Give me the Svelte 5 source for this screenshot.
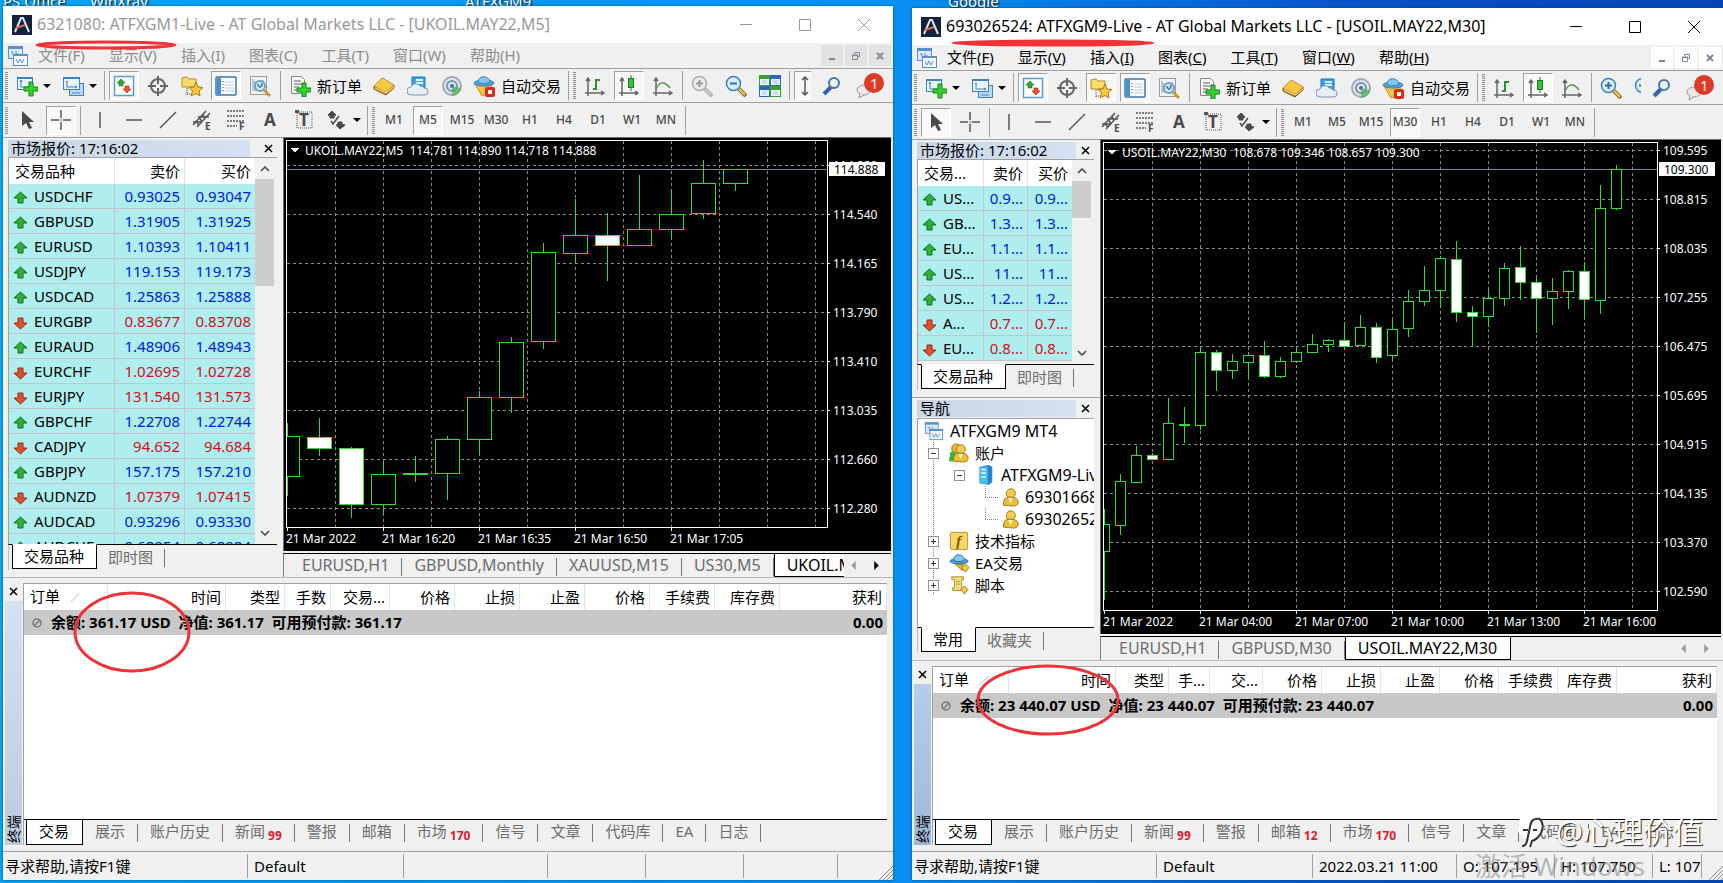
<script>
    const up = true;
    const down = false;

    const menus = [
        ['文件', 'F'],
        ['显示', 'V'],
        ['插入', 'I'],
        ['图表', 'C'],
        ['工具', 'T'],
        ['窗口', 'W'],
        ['帮助', 'H']
    ];

    const drawTools = ['vline', 'hline', 'trend', 'channel', 'fibo', 'letter', 'label'];
    const periods = ['M1', 'M5', 'M15', 'M30', 'H1', 'H4', 'D1', 'W1', 'MN'];

    // candle: [high, body top, body bottom, low, bearish]
    let windows = $state([
        {
            id: 'gm1',
            active: false,
            title: '6321080: ATFXGM1-Live - AT Global Markets LLC - [UKOIL.MAY22,M5]',
            pressed: ['watch', 'terminal'],
            cursor: 'cross',
            period: 'M5',
            head: ['交易品种', '卖价', '买价'],
            quotes: [
                ['USDCHF', '0.93025', '0.93047', up],
                ['GBPUSD', '1.31905', '1.31925', up],
                ['EURUSD', '1.10393', '1.10411', up],
                ['USDJPY', '119.153', '119.173', up],
                ['USDCAD', '1.25863', '1.25888', up],
                ['EURGBP', '0.83677', '0.83708', down],
                ['EURAUD', '1.48906', '1.48943', up],
                ['EURCHF', '1.02695', '1.02728', down],
                ['EURJPY', '131.540', '131.573', down],
                ['GBPCHF', '1.22708', '1.22744', up],
                ['CADJPY', '94.652', '94.684', down],
                ['GBPJPY', '157.175', '157.210', up],
                ['AUDNZD', '1.07379', '1.07415', down],
                ['AUDCAD', '0.93296', '0.93330', up],
                ['AUDCHF', '0.68954', '0.68984', up]
            ],
            navigator: false,
            chart: {
                width: 607,
                height: 413,
                caption: 'UKOIL.MAY22,M5  114.781 114.890 114.718 114.888',
                last: '114.888',
                lastLine: 31,
                firstLine: 27,
                prices: ['114.920', '114.540', '114.165', '113.790', '113.410', '113.035', '112.660', '112.280'],
                times: ['21 Mar 2022', '21 Mar 16:20', '21 Mar 16:35', '21 Mar 16:50', '21 Mar 17:05'],
                step: 32,
                half: 12,
                candles: [
                    [285, 298, 338, 358], [280, 299, 310, 318, 1], [309, 310, 366, 380, 1],
                    [324, 336, 366, 377], [318, 335, 336, 344], [298, 301, 335, 362],
                    [253, 259, 301, 316], [199, 204, 259, 275], [105, 114, 203, 211],
                    [61, 97, 115, 125], [75, 97, 107, 143, 1], [37, 91, 107, 108],
                    [51, 76, 91, 100], [22, 45, 75, 81], [31, 31, 45, 53]
                ]
            },
            chartTabs: ['EURUSD,H1', 'GBPUSD,Monthly', 'XAUUSD,M15', 'US30,M5', 'UKOIL.MAY22,M5'],
            moreTabs: true,
            columns: ['时间', '类型', '手数', '交易...', '价格', '止损', '止盈', '价格', '手续费', '库存费', '获利'],
            balance: '余额: 361.17 USD  净值: 361.17  可用预付款: 361.17',
            bottomTabs: [['交易'], ['展示'], ['账户历史'], ['新闻', 99], ['警报'], ['邮箱'], ['市场', 170], ['信号'], ['文章'], ['代码库'], ['EA'], ['日志']],
            status: ['', '', '', '', '']
        },
        {
            id: 'gm9',
            active: true,
            title: '693026524: ATFXGM9-Live - AT Global Markets LLC - [USOIL.MAY22,M30]',
            pressed: ['watch', 'navigator', 'terminal'],
            cursor: 'arrow',
            period: 'M30',
            head: ['交易...', '卖价', '买价'],
            quotes: [
                ['US...', '0.9...', '0.9...', up],
                ['GB...', '1.3...', '1.3...', up],
                ['EU...', '1.1...', '1.1...', up],
                ['US...', '11...', '11...', up],
                ['US...', '1.2...', '1.2...', up],
                ['A...', '0.7...', '0.7...', down],
                ['EU...', '0.8...', '0.8...', down]
            ],
            navigator: true,
            chart: {
                width: 620,
                height: 494,
                caption: 'USOIL.MAY22,M30  108.678 109.346 108.657 109.300',
                last: '109.300',
                lastLine: 29,
                firstLine: 10,
                prices: ['109.595', '108.815', '108.035', '107.255', '106.475', '105.695', '104.915', '104.135', '103.370', '102.590'],
                times: ['21 Mar 2022', '21 Mar 04:00', '21 Mar 07:00', '21 Mar 10:00', '21 Mar 13:00', '21 Mar 16:00'],
                step: 16,
                half: 5,
                candles: [
                    [369, 384, 411, 460], [334, 341, 385, 395], [306, 315, 342, 343], [313, 315, 319, 320, 1],
                    [258, 283, 319, 320], [267, 284, 285, 303, 1], [207, 212, 285, 290], [210, 212, 230, 251, 1],
                    [214, 221, 230, 239], [212, 215, 222, 238], [201, 215, 236, 238, 1], [217, 221, 236, 238],
                    [206, 212, 221, 223], [194, 204, 212, 212], [199, 200, 204, 212], [182, 200, 206, 210, 1],
                    [175, 187, 205, 206], [183, 187, 217, 223, 1], [180, 189, 215, 221], [150, 161, 188, 197],
                    [126, 150, 161, 166], [116, 118, 150, 168], [101, 119, 172, 182, 1], [166, 172, 176, 207, 1],
                    [150, 158, 176, 187], [123, 128, 158, 166], [106, 127, 142, 160, 1], [138, 142, 158, 193, 1],
                    [138, 151, 158, 185], [130, 131, 151, 169], [122, 131, 159, 178, 1], [45, 68, 160, 174],
                    [25, 29, 68, 70]
                ]
            },
            chartTabs: ['EURUSD,H1', 'GBPUSD,M30', 'USOIL.MAY22,M30'],
            moreTabs: false,
            columns: ['时间', '类型', '手...', '交...', '价格', '止损', '止盈', '价格', '手续费', '库存费', '获利'],
            balance: '余额: 23 440.07 USD  净值: 23 440.07  可用预付款: 23 440.07',
            bottomTabs: [['交易'], ['展示'], ['账户历史'], ['新闻', 99], ['警报'], ['邮箱', 12], ['市场', 170], ['信号'], ['文章'], ['代码库'], ['EA'], ['日志']],
            status: ['2022.03.21 11:00', 'O: 107.195', 'H: 107.750', 'L: 107', '']
        }
    ]);

    function gridColumns(width) {
        const lines = [];
        for (let x = 51; x < width - 64; x += 48) lines.push(x);
        return lines;
    }
</script>

{#snippet icon(name)}
    <svg class="icon" viewBox="0 0 22 22" aria-hidden="true">
        {#if name === 'newchart'}
            <rect x="1.5" y="2.5" width="15" height="12" fill="#eaf4fd" stroke="#3f82bd" />
            <path d="M1 3h16" stroke="#3f82bd" stroke-width="2" />
            <path d="M5 6v6h8M4 7l1-2 1 2" fill="none" stroke="#4a7fb0" />
            <path d="M13 7h4v5h5v4h-5v5h-4v-5H8v-4h5z" fill="#35d02c" stroke="#14831a" />
        {:else if name === 'profiles'}
            <rect x="7.5" y="8.5" width="14" height="12" fill="#b9d9f2" stroke="#3f82bd" />
            <rect x="1.5" y="2.5" width="16" height="12" fill="#eaf4fd" stroke="#3f82bd" />
            <path d="M1 3h17" stroke="#3f82bd" stroke-width="2" />
            <path d="M5 6v6h9M4 7l1-1 1 1M13 11l2 1-2 1M10 18h8" fill="none" stroke="#4a7fb0" />
        {:else if name === 'watch'}
            <rect x="1.5" y="1.5" width="19" height="19" fill="#fff" stroke="#5a9bd0" stroke-width="1.5" />
            <path d="M8 4l4 4h-2v3H6V8H4z" fill="#2daa2f" stroke="#15701a" stroke-width=".6" />
            <path d="M14 18l-4-4h2v-3h4v3h2z" fill="#f0512b" stroke="#a92b12" stroke-width=".6" />
        {:else if name === 'target'}
            <circle cx="11" cy="11" r="7" fill="none" stroke="#666" stroke-width="2" />
            <path d="M11 1v8M11 13v8M1 11h8M13 11h8" stroke="#666" stroke-width="2" />
        {:else if name === 'navigator'}
            <path d="M1 3l5-1 2 2h7v8H1z" fill="#f8dc6c" stroke="#b58a24" />
            <path d="M6 13v7M6 19h5" stroke="#444" stroke-dasharray="1 1" />
            <path d="M15 7l2 5 5 .5-4 3.5 1 5-4-2.5-5 2.5 1.5-5-3.5-3.5 5-.5z" fill="#fdc73a" stroke="#a97714" />
        {:else if name === 'terminal'}
            <rect x="1" y="2" width="20" height="18" rx="1" fill="#fff" stroke="#3977ad" stroke-width="1.5" />
            <path d="M2 3h4v16H2z" fill="#4a90cc" />
            <path d="M10 7h9M10 10h9M10 13h9M10 16h9" stroke="#b9c9d8" />
            <path d="M8 6v11" stroke="#16466f" stroke-dasharray="1 2" />
        {:else if name === 'tester'}
            <rect x="1.5" y="1.5" width="16" height="18" fill="#f4f4f4" stroke="#9a9a9a" />
            <path d="M4 4v12M6 6v10M14 5v6" stroke="#7a97b2" />
            <circle cx="11" cy="11" r="5" fill="#d6ebfa" stroke="#6ea0cb" stroke-width="2" />
            <path d="M9 12V9l2 4 2-5v4" fill="none" stroke="#386d99" />
            <path d="M15 15l6 6" stroke="#c29a3a" stroke-width="3" />
        {:else if name === 'order'}
            <path d="M2.5 1.5h10l3 3v14h-13z" fill="#f6f6f6" stroke="#888" />
            <path d="M5 6h7M5 9h8M5 12h5M5 15h4" stroke="#666" />
            <path d="M13 8h4v5h5v4h-5v5h-4v-5H8v-4h5z" fill="#35d02c" stroke="#14831a" />
        {:else if name === 'book'}
            <path d="M1 11L9 3l12 7v3l-8 7L1 14z" fill="#b67b15" stroke="#8a5a0c" />
            <path d="M1 11L9 3l12 7-8 7z" fill="#f7c843" />
            <path d="M2 13l11 5 8-6" fill="none" stroke="#fff1b0" />
        {:else if name === 'cloud'}
            <path d="M5 2h13v12H5z" fill="#39a3ec" stroke="#1f75b6" />
            <path d="M9 5h7M9 8h7" stroke="#e5f5ff" stroke-width="2" />
            <path d="M4 20a4 4 0 010-8 5 5 0 019-1 4 4 0 014 2 3.5 3.5 0 011 7z" fill="#e8eef6" stroke="#7c93b3" />
        {:else if name === 'signal'}
            <circle cx="11" cy="11" r="9" fill="#dfe5ea" stroke="#a2aab2" stroke-width="2" />
            <circle cx="11" cy="11" r="5" fill="none" stroke="#7896b3" stroke-width="2" />
            <circle cx="11" cy="11" r="2" fill="#456f9b" />
            <path d="M11 11v10a10 10 0 009-8z" fill="#4cab55" opacity=".7" />
        {:else if name === 'expert'}
            <path d="M2 9h17l-4 10-6 2z" fill="#f0c243" stroke="#c09330" />
            <ellipse cx="11" cy="8" rx="10" ry="3" fill="#4e9fd6" stroke="#3c82b6" />
            <path d="M5 7c0-7 11-7 12 0-3 2-9 2-12 0z" fill="#84c6ef" stroke="#3c82b6" />
            <rect x="12" y="12" width="10" height="10" rx="2" fill="#da2a1b" />
            <path d="M15 15h4v4h-4z" fill="#fff" />
        {:else if name === 'bars'}
            <path d="M4 3v18M1 18h19M2 6l2-3 2 3M17 16l3 2-3 2" fill="none" stroke="#666" stroke-width="1.5" />
            <path d="M12 4v11M12 5h4M9 14h3" stroke="#2f8d35" stroke-width="2" />
        {:else if name === 'candles'}
            <path d="M4 3v18M1 18h19M2 6l2-3 2 3M17 16l3 2-3 2" fill="none" stroke="#666" stroke-width="1.5" />
            <path d="M13 0v16" stroke="#1b7d24" />
            <rect x="10.5" y="3.5" width="5" height="9" fill="#2fc736" stroke="#167a1f" />
        {:else if name === 'line'}
            <path d="M4 3v18M1 18h19M2 6l2-3 2 3M17 16l3 2-3 2" fill="none" stroke="#666" stroke-width="1.5" />
            <path d="M4 14c4-8 8-8 14-1" fill="none" stroke="#4c9450" stroke-width="1.5" />
        {:else if name === 'zoomin' || name === 'zoomout' || name === 'zoomoff'}
            {@const off = name === 'zoomoff'}
            <path d="M14 14l7 7" stroke={off ? '#aaa' : '#8a6a20'} stroke-width="4" />
            <path d="M14 14l6 6" stroke={off ? '#ccc' : '#f3ca55'} stroke-width="2" />
            <circle cx="8.5" cy="8.5" r="7" fill={off ? '#ececec' : '#d9eefb'} stroke={off ? '#aaa' : '#3b7fc0'} stroke-width="1.5" />
            <path d="M5 8.5h7" stroke={off ? '#999' : '#2a6dae'} stroke-width="2" />
            {#if name !== 'zoomout'}<path d="M8.5 5v7" stroke={off ? '#999' : '#2a6dae'} stroke-width="2" />{/if}
        {:else if name === 'tile'}
            <path d="M0 0h11v11H0zM11 11h11v11H11z" fill="#3d9c34" />
            <path d="M11 0h11v11H11zM0 11h11v11H0z" fill="#2f66bb" />
            <path d="M1 4h9v6H1zM12 4h9v6h-9zM1 15h9v6H1zM12 15h9v6h-9z" fill="#e9f3fb" />
            <path d="M3 6h5M3 8h5M14 6h5M14 8h5M3 17h5M3 19h5M14 17h5M14 19h5" stroke="#a9cbe6" />
        {:else if name === 'shift'}
            <path d="M7 2v18M4 5l3-3 3 3M4 17l3 3 3-3" fill="none" stroke="#555" stroke-width="1.5" />
        {:else if name === 'search'}
            <path d="M3 19l7-7" stroke="#36669f" stroke-width="4" />
            <circle cx="13" cy="8" r="5" fill="#eaf3fb" stroke="#4678b0" stroke-width="2" />
        {:else if name === 'arrow'}
            <path d="M6 2v15l4-3 3 6 3-1-3-6h5z" fill="#4a4a4a" />
        {:else if name === 'cross'}
            <path d="M11 1v8M11 13v8M1 11h8M13 11h8" stroke="#555" stroke-width="1.5" />
            <path d="M11 10v2" stroke="#555" />
        {:else if name === 'vline'}
            <path d="M11 3v16" stroke="#555" stroke-width="1.5" />
        {:else if name === 'hline'}
            <path d="M3 11h16" stroke="#555" stroke-width="1.5" />
        {:else if name === 'trend'}
            <path d="M3 19L19 3" stroke="#555" stroke-width="1.5" />
        {:else if name === 'channel'}
            <path d="M2 16L15 2M6 18L19 4M4 12l4 4M8 8l3 5M12 5l2 5M2 13h9M7 8h11" fill="none" stroke="#555" stroke-width="1.5" />
            <text x="14" y="21" class="glyph-s">E</text>
        {:else if name === 'fibo'}
            <path d="M2 2h18M2 7h18M2 12h18M2 17h10" stroke="#555" stroke-width="1.5" stroke-dasharray="2 1" />
            <text x="14" y="21" class="glyph-s">F</text>
        {:else if name === 'letter'}
            <text x="5" y="17" class="glyph">A</text>
        {:else if name === 'label'}
            <rect x="4" y="3" width="15" height="16" fill="none" stroke="#555" stroke-dasharray="1 1" />
            <path d="M2 1h4v3H2z" fill="#555" />
            <text x="6" y="17" class="glyph">T</text>
        {:else if name === 'arrows'}
            <path d="M2 6l4-4 4 4-2 1v2H4V7zM12 15v-2h4v2l3 1-5 4-4-4z" fill="#4a4a4a" stroke="#4a4a4a" />
            <path d="M5 12l2 3 6-8" fill="none" stroke="#4a4a4a" stroke-width="1.5" />
        {:else if name === 'mt'}
            <rect x="1.5" y="1.5" width="14" height="12" fill="#dcecfa" stroke="#5b8fcb" />
            <path d="M1 3h15" stroke="#5b8fcb" stroke-width="2" />
            <path d="M4 7h2v3M9 6v3h3" fill="none" stroke="#5b8fcb" />
            <rect x="6.5" y="9.5" width="14" height="11" fill="#f4f9fe" stroke="#5b8fcb" />
            <path d="M6 10h15" stroke="#5b8fcb" stroke-width="2" />
            <path d="M9 14l2 4 2-4 2 4 2-4" fill="none" stroke="#5b8fcb" />
        {:else if name === 'accounts' || name === 'user'}
            {#if name === 'accounts'}
                <circle cx="8" cy="6" r="5" fill="#e4b530" stroke="#9b7412" />
                <circle cx="4" cy="12" r="3" fill="#34b83b" />
                <path d="M0 20q0-7 4-7t5 7z" fill="#34b83b" />
            {/if}
            <circle cx="13" cy="7" r="5" fill="#f2cc4d" stroke="#9b7412" />
            <path d="M5 20q-1-9 7-9 10 0 9 7-1 3-5 3z" fill="#edbf38" stroke="#9b7412" />
            <path d="M10 12l3 6 2-6" fill="#fff5c9" />
        {:else if name === 'server'}
            <path d="M5 2l10-2 4 2v17l-4 3-10-2z" fill="#1f86d6" />
            <path d="M5 2h9v19l-9-1z" fill="#4cbcf5" />
            <path d="M7 5h5M7 9h5M7 13h5" stroke="#e3f6ff" stroke-width="2" />
        {:else if name === 'function'}
            <rect x="1.5" y="1.5" width="19" height="19" rx="2" fill="#f8d566" stroke="#b48b26" />
            <text x="8" y="16" class="glyph-f">f</text>
        {:else if name === 'hat'}
            <path d="M7 12l7 7 3-2-2-5z" fill="#e2b23a" stroke="#9b7412" />
            <ellipse cx="11" cy="9" rx="10" ry="3" fill="#4e9fd6" stroke="#2e6b9b" />
            <path d="M5 8c0-8 11-8 12 0-3 2-9 2-12 0z" fill="#84c6ef" stroke="#2e6b9b" />
            <path d="M18 12l4 4-4 5-4-5z" fill="#f5ca48" stroke="#9b7412" />
        {:else if name === 'script'}
            <path d="M3 2h13v3h-2v12H4v-3h2V5H3z" fill="#f6dc79" stroke="#ab8a2c" />
            <path d="M8 7h4M8 10h4" stroke="#ab8a2c" />
            <path d="M17 12l4 4-4 5-4-5z" fill="#f5ca48" stroke="#9b7412" />
        {/if}
    </svg>
{/snippet}

{#snippet tool(name, pressed)}
    <button class="tool" class:pressed aria-label={name}>{@render icon(name)}</button>
{/snippet}

{#snippet dropTool(name)}
    <button class="tool drop" aria-label={name}>{@render icon(name)}<i class="caret"></i></button>
{/snippet}

{#snippet panelTabs(first, second)}
    <div class="tabs panel-tabs">
        <button class="tab current">{first}</button>
        <button class="tab">{second}</button>
    </div>
{/snippet}

{#snippet panelTitle(text)}
    <header class="panel-title">
        <span>{text}</span>
        <button class="close" aria-label="关闭"><svg viewBox="0 0 9 9"><path d="M1 1l7 7M8 1L1 8" /></svg></button>
    </header>
{/snippet}

{#snippet chart(c)}
    {@const right = c.width - 64}
    {@const bottom = c.height - 24}
    <svg class="plot" width="100%" height="100%" shape-rendering="crispEdges">
        {#each gridColumns(c.width) as x}
            <line class="grid" x1={x + 0.5} x2={x + 0.5} y1="3" y2={bottom} />
        {/each}
        {#each c.prices as price, i}
            {@const y = c.firstLine + i * 49}
            <line class="grid" x1="3" x2={right} y1={y + 0.5} y2={y + 0.5} />
            <line class="frame" x1={right} x2={right + 3} y1={y + 0.5} y2={y + 0.5} />
            <text x={right + 6} y={y + 5}>{price}</text>
        {/each}
        <line class="bid" x1="3" x2={right} y1={c.lastLine + 0.5} y2={c.lastLine + 0.5} />
        {#each c.candles as [high, top, low, tail, bear], i}
            {@const x = 3 + i * c.step}
            <line class="wick" x1={x + 0.5} x2={x + 0.5} y1={high} y2={tail} />
            <rect class="body" class:bear x={x - c.half + 0.5} y={top + 0.5} width={c.half * 2} height={low - top} />
        {/each}
        <rect x="0" y="0" width="2" height={bottom} />
        <rect class="frame" x="2.5" y="2.5" width={right - 2} height={bottom - 2} />
        {#each c.times as time, i}
            <line class="frame" x1={3.5 + i * 96} x2={3.5 + i * 96} y1={bottom} y2={bottom + 4} />
            <text x={2 + i * 96} y={bottom + 16}>{time}</text>
        {/each}
        <rect class="last-box" x={right + 2} y={c.lastLine - 7} width="56" height="14" />
        <text class="last" x={right + 7} y={c.lastLine + 5}>{c.last}</text>
        <path class="mark" d="M6 10h9l-4 5z" />
        <text x="21" y="17">{c.caption}</text>
    </svg>
{/snippet}

<main class="desktop">
    <div class="shortcuts">
        <span class="ps">PS Office</span>
        <span class="wx">WinXray</span>
        <span class="at">ATFXGM9</span>
        <span class="gg">Google</span>
    </div>

    {#each windows as win (win.id)}
        <section class="window {win.id}" class:active={win.active}>
            <header class="titlebar">
                <svg class="logo" viewBox="0 0 20 20">
                    <path d="M0 0h20v20H0z" fill="#14213f" />
                    <path d="M3 17L9 3h2l6 14" fill="none" stroke="#dfe5ef" stroke-width="2" />
                    <path d="M4 13l9-3" stroke="#df6a4a" stroke-width="2" />
                </svg>
                <h1>{win.title}</h1>
                <button class="caption" aria-label="最小化"><svg viewBox="0 0 12 12"><path d="M0 5.5h12" /></svg></button>
                <button class="caption" aria-label="最大化"><svg viewBox="0 0 12 12"><path d="M.5.5h11v11H.5z" /></svg></button>
                <button class="caption" aria-label="关闭"><svg viewBox="0 0 12 12"><path d="M0 0l12 12M12 0L0 12" /></svg></button>
            </header>

            <nav class="menubar">
                {@render icon('mt')}
                {#each menus as [label, key]}
                    <button>{label}(<span class="key">{key}</span>)</button>
                {/each}
                <div class="mdi">
                    <button aria-label="最小化"><svg viewBox="0 0 10 10"><path d="M2 8h6" /></svg></button>
                    <button aria-label="还原"><svg viewBox="0 0 10 10"><path class="thin" d="M3.5 3V1.5h5v4H7M1.5 4.5h5v4h-5zM1 4h6" /></svg></button>
                    <button aria-label="关闭"><svg viewBox="0 0 10 10"><path d="M2 2l6 6M8 2L2 8" /></svg></button>
                </div>
            </nav>

            <div class="toolbar">
                <div class="strip">
                    <i class="grip"></i>
                    {@render dropTool('newchart')}
                    {@render dropTool('profiles')}
                    <i class="sep"></i>
                    {@render tool('watch', true)}
                    {@render tool('target', false)}
                    {@render tool('navigator', win.pressed.includes('navigator'))}
                    {@render tool('terminal', true)}
                    {@render tool('tester', false)}
                    <i class="sep wide"></i>
                    <button class="tool text">{@render icon('order')}新订单</button>
                    {@render tool('book', false)}
                    {@render tool('cloud', false)}
                    {@render tool('signal', false)}
                    <button class="tool text">{@render icon('expert')}自动交易</button>
                    <i class="sep"></i>
                    <i class="grip"></i>
                    {@render tool('bars', false)}
                    {@render tool('candles', true)}
                    {@render tool('line', false)}
                    <i class="sep"></i>
                    {@render tool(win.active ? 'zoomin' : 'zoomoff', false)}
                    {@render tool('zoomout', false)}
                    {@render tool('tile', false)}
                    <i class="sep"></i>
                    {@render tool('shift', true)}
                </div>
                <div class="strip-end">
                    {@render tool('search', false)}
                    <button class="tool chat" aria-label="消息">
                        <svg viewBox="0 0 30 26"><ellipse cx="9" cy="17" rx="7" ry="5" /><path d="M5 20l-1 5 5-3" /><circle cx="19" cy="10" r="10" /></svg>
                        <b>1</b>
                    </button>
                </div>
            </div>

            <div class="toolbar second">
                <div class="strip">
                    <i class="grip"></i>
                    {@render tool('arrow', win.cursor === 'arrow')}
                    {@render tool('cross', win.cursor === 'cross')}
                    <i class="sep"></i>
                    {#each drawTools as name}
                        {@render tool(name, false)}
                    {/each}
                    {@render dropTool('arrows')}
                    <i class="sep"></i>
                    <i class="grip"></i>
                    {#each periods as p}
                        <button class="tool period" class:pressed={p === win.period}>{p}</button>
                    {/each}
                    <i class="sep"></i>
                </div>
            </div>

            <div class="workspace">
                <aside class="side">
                    <section class="panel watch">
                        {@render panelTitle('市场报价: 17:16:02')}
                        <div class="list">
                            <table class="quotes">
                                <thead>
                                    <tr>{#each win.head as h}<th>{h}</th>{/each}</tr>
                                </thead>
                                <tbody>
                                    {#each win.quotes as [symbol, bid, ask, rising]}
                                        <tr class:rising>
                                            <td><svg class="trend" viewBox="0 0 13 12"><path d={rising ? 'M6.5 0L13 6H9V11H4V6H0z' : 'M6.5 12L13 6H9V1H4v5H0z'} /></svg>{symbol}</td>
                                            <td>{bid}</td>
                                            <td>{ask}</td>
                                        </tr>
                                    {/each}
                                </tbody>
                            </table>
                            <div class="scrollbar">
                                <svg viewBox="0 0 10 6"><path d="M1 5l4-4 4 4" /></svg>
                                <i class="thumb"></i>
                                <svg viewBox="0 0 10 6"><path d="M1 1l4 4 4-4" /></svg>
                            </div>
                        </div>
                        {@render panelTabs('交易品种', '即时图')}
                    </section>

                    {#if win.navigator}
                        <section class="panel nav">
                            {@render panelTitle('导航')}
                            <ul class="tree">
                                <li>{@render icon('mt')}ATFXGM9 MT4</li>
                                <li class="l1"><i class="box"></i>{@render icon('accounts')}<span>账户</span></li>
                                <li class="l2"><i class="box"></i>{@render icon('server')}ATFXGM9-Live</li>
                                <li class="l3">{@render icon('user')}69301668</li>
                                <li class="l3">{@render icon('user')}693026524</li>
                                <li class="l1"><i class="box closed"></i>{@render icon('function')}<span>技术指标</span></li>
                                <li class="l1"><i class="box closed"></i>{@render icon('hat')}<span>EA交易</span></li>
                                <li class="l1"><i class="box closed"></i>{@render icon('script')}<span>脚本</span></li>
                            </ul>
                            {@render panelTabs('常用', '收藏夹')}
                        </section>
                    {/if}
                </aside>

                <div class="charts">
                    <div class="chart" bind:clientWidth={win.chart.width} bind:clientHeight={win.chart.height}>
                        {@render chart(win.chart)}
                    </div>
                    <div class="chart-bar">
                        <div class="tabs">
                            {#each win.chartTabs as t, i}
                                <button class="tab" class:current={i === win.chartTabs.length - 1}>{t}</button>
                            {/each}
                        </div>
                        <div class="pager">
                            <svg viewBox="0 0 5 10"><path d="M5 0v10L0 5z" /></svg>
                            <svg viewBox="0 0 5 10" class:more={win.moreTabs}><path d="M0 0v10l5-5z" /></svg>
                        </div>
                    </div>
                </div>
            </div>

            <section class="terminal">
                <div class="handle">
                    <button class="close" aria-label="关闭"><svg viewBox="0 0 9 9"><path d="M1 1l7 7M8 1L1 8" /></svg></button>
                    <div class="band"><span>终端</span></div>
                </div>
                <div class="ledger">
                    <div class="ledger-body">
                        <table class="orders">
                            <thead>
                                <tr>
                                    <th>订单 <span class="sort">∕</span></th>
                                    {#each win.columns as col}<th>{col}</th>{/each}
                                </tr>
                            </thead>
                            <tbody>
                                <tr>
                                    <td colspan="11"><svg class="none" viewBox="0 0 10 10"><circle cx="5" cy="5" r="4" /><path d="M2 8l6-6" /></svg>{win.balance}</td>
                                    <td>0.00</td>
                                </tr>
                            </tbody>
                        </table>
                    </div>
                    <div class="tabs">
                        {#each win.bottomTabs as [label, count], i}
                            <button class="tab" class:current={i === 0}>{label}{#if count}<sub>{count}</sub>{/if}</button>
                        {/each}
                    </div>
                </div>
            </section>

            <footer class="status">
                <span class="hint">寻求帮助,请按F1键</span>
                <span class="profile">Default</span>
                {#each win.status as cell}<span>{cell}</span>{/each}
                <svg class="resize" viewBox="0 0 14 14"><path d="M0 14L14 0M4 14L14 4M8 14l6-6M12 14l2-2" /></svg>
            </footer>

            {#if win.id === 'gm1'}
                <svg class="ink name"><ellipse cx="72" cy="6" rx="69" ry="3" /></svg>
                <svg class="ink money"><ellipse cx="59" cy="42" rx="57" ry="39" /></svg>
            {:else}
                <svg class="ink name solid"><ellipse cx="102" cy="6" rx="100" ry="2" /></svg>
                <svg class="ink money"><ellipse cx="72" cy="37" rx="70" ry="34" /></svg>
            {/if}
        </section>
    {/each}

    <div class="activate">激活 Windows</div>
    <div class="watermark">
        <svg viewBox="0 0 32 34">
            <path d="M4 2q14-4 22 4 6 10-6 18l-8 8 2-8Q0 22 2 12z" fill="#fff" />
            <path d="M24 4q-9-2-10 8l-3 14q-1 5-5 5M7 15h5M17 15h4M24 4q5 6 1 14-3 6-9 8-1 3-2 6" fill="none" stroke="#333" stroke-width="2" />
        </svg>
        @心理价值
    </div>
</main>

<style>
    :global(body) {
        background: #0093f0;
    }

    .desktop {
        position: relative;
        display: grid;
        grid-template-columns: 890fr 811fr;
        gap: 19px;
        box-sizing: border-box;
        min-height: 100vh;
        padding: 6px 0 3px 3px;
        overflow: hidden;
        background: linear-gradient(90deg, #08a4f4, #0791f2 52%, #0850c4 80%, #0646b4);
        font-family: "Noto Sans", "Noto Sans CJK SC", sans-serif;
        font-size: 15px;
        line-height: 20px;
        color: #000;
    }

    button {
        border: 0;
        padding: 0;
        margin: 0;
        background: none;
        font: inherit;
        color: inherit;
        white-space: nowrap;
    }

    svg {
        display: block;
        flex: none;
    }

    i {
        font-style: normal;
    }

    .shortcuts {
        position: absolute;
        top: -9px;
        left: 0;
        color: #fff;
        text-shadow: 1px 1px 2px #000;
        white-space: nowrap;
    }

    .shortcuts span {
        position: absolute;
    }

    .ps { left: 3px; }
    .wx { left: 90px; }
    .at { left: 465px; }
    .gg { left: 948px; }

    .window {
        position: relative;
        display: flex;
        flex-direction: column;
        min-width: 0;
        background: #f0f0f0;
        box-shadow: 0 0 2px #00427c;
    }

    .gm9 {
        margin-top: 2px;
    }

    /* title and menu */
    .titlebar {
        display: flex;
        align-items: center;
        height: 37px;
        background: #fff;
        color: #999;
    }

    .active .titlebar {
        color: #000;
    }

    .logo {
        width: 20px;
        height: 20px;
        margin: 0 5px 0 9px;
    }

    .titlebar h1 {
        flex: 1;
        min-width: 0;
        margin: 0;
        padding-bottom: 2px;
        overflow: hidden;
        font-size: 16px;
        font-weight: 400;
        white-space: nowrap;
    }

    .caption {
        display: grid;
        place-items: center;
        width: 59px;
        height: 37px;
    }

    .caption svg {
        width: 12px;
        height: 12px;
        fill: none;
        stroke: currentColor;
    }

    .menubar {
        display: flex;
        align-items: center;
        gap: 24px;
        height: 25px;
        padding-left: 4px;
        color: #8c8c8c;
    }

    .menubar > button {
        padding-bottom: 2px;
    }

    .menubar .icon {
        margin-right: -15px;
    }

    .active .menubar {
        color: #000;
    }

    .active .key {
        text-decoration: underline;
    }

    .mdi {
        display: flex;
        gap: 2px;
        margin-left: auto;
        padding-right: 2px;
    }

    .mdi button {
        display: grid;
        place-items: center;
        width: 22px;
        height: 21px;
        background: #e2e2e2;
    }

    .active .mdi button {
        background: #fff;
    }

    .mdi svg {
        width: 10px;
        height: 10px;
        fill: none;
        stroke: #7b8794;
        stroke-width: 2;
    }

    .mdi .thin {
        stroke-width: 1;
    }

    /* toolbars */
    .toolbar {
        display: flex;
        height: 33px;
        border-top: 1px solid #a0a0a0;
        background: #f0f0f0;
    }

    .toolbar.second {
        height: 34px;
    }

    .strip {
        display: flex;
        flex: 1;
        align-items: center;
        gap: 4px;
        min-width: 0;
        padding-left: 2px;
        overflow: hidden;
    }

    .strip-end {
        display: flex;
        flex: none;
        align-items: center;
        gap: 8px;
        width: 76px;
        padding-left: 6px;
    }

    .icon {
        width: 22px;
        height: 22px;
    }

    .grip {
        flex: none;
        width: 3px;
        height: 27px;
        background: repeating-linear-gradient(#8f8f8f 0 1px, #f0f0f0 1px 2px);
    }

    .sep {
        flex: none;
        width: 1px;
        height: 29px;
        background: #a0a0a0;
    }

    .sep.wide {
        margin: 0 2px 0 1px;
    }

    .tool {
        display: flex;
        flex: none;
        align-items: center;
        justify-content: center;
        box-sizing: border-box;
        width: 30px;
        height: 29px;
        border: 1px solid transparent;
    }

    .tool.pressed {
        border-color: #a0a0a0 #fff #fff #a0a0a0;
        background: #f8f8f8;
    }

    .tool.drop {
        gap: 5px;
        width: 42px;
    }

    .second .tool.drop {
        width: 40px;
    }

    .tool.text {
        gap: 6px;
        width: auto;
        padding: 0 2px 0 1px;
    }

    .caret {
        border: 4px solid transparent;
        border-top-color: #000;
        border-bottom: 0;
    }

    .period {
        color: #4a4a4a;
        font-size: 12px;
        font-weight: 500;
    }

    .glyph,
    .glyph-s,
    .glyph-f {
        fill: #4a4a4a;
        font: bold 17px "Noto Sans", sans-serif;
    }

    .glyph-s {
        font-size: 10px;
    }

    .glyph-f {
        fill: #77540d;
        font: italic bold 16px "Liberation Serif", serif;
    }

    .chat {
        position: relative;
    }

    .chat svg {
        width: 30px;
        height: 26px;
    }

    .chat ellipse,
    .chat path {
        fill: #e8e8e8;
        stroke: #999;
    }

    .chat circle {
        fill: #e03a24;
    }

    .chat b {
        position: absolute;
        top: 1px;
        left: 14px;
        color: #fff;
        font-weight: 400;
    }

    /* workspace */
    .workspace {
        display: flex;
        flex: 1;
        min-height: 0;
    }

    .side {
        display: flex;
        flex: none;
        flex-direction: column;
        box-sizing: border-box;
        width: 280px;
        border-top: 1px solid #a0a0a0;
    }

    .gm9 .side {
        width: 188px;
    }

    .panel {
        display: flex;
        flex: 1;
        flex-direction: column;
        box-sizing: border-box;
        min-height: 0;
        padding: 2px 6px 7px 5px;
    }

    .gm9 .watch {
        flex: none;
        height: 257px;
    }

    .nav {
        border-top: 1px solid #a0a0a0;
    }

    .panel-title {
        display: flex;
        align-items: center;
        height: 17px;
        background: linear-gradient(90deg, #c8d6e6, #d5e1f1 90%, #f0f0f0 90%);
    }

    .panel-title span {
        flex: 1;
        padding: 0 0 2px 3px;
    }

    .close {
        width: 17px;
        height: 16px;
    }

    .close svg {
        width: 9px;
        height: 9px;
        margin: auto;
        stroke: #000;
        stroke-width: 1.5;
    }

    .list {
        display: flex;
        flex: 1;
        min-height: 0;
        border-top: 1px solid #a0a0a0;
        border-left: 1px solid #a0a0a0;
        border-bottom: 1px solid #000;
        overflow: hidden;
        /* the table must not push the panel taller than its share */
        contain: size;
    }

    table {
        border-collapse: separate;
        border-spacing: 0;
        table-layout: fixed;
    }

    th,
    td {
        box-sizing: border-box;
        height: 25px;
        padding: 0 4px;
        overflow: hidden;
        font-weight: 400;
        text-align: right;
        white-space: nowrap;
    }

    th {
        height: 26px;
        border-right: 1px solid #e5e5e5;
        background: #fff;
    }

    th:first-child,
    td:first-child {
        text-align: left;
        padding-left: 6px;
    }

    .quotes {
        flex: 1;
        width: 100%;
        height: 0;
    }

    .quotes th:nth-child(n + 2) {
        width: 70px;
    }

    .gm9 .quotes th:nth-child(n + 2) {
        width: 44px;
    }

    .quotes td {
        border-right: 1px solid #c6c3cb;
        border-bottom: 1px solid #c6c3cb;
        background: #afeeee;
        color: #d01020;
    }

    .quotes td:last-child,
    .quotes th:last-child {
        border-right: 0;
    }

    .quotes .rising td {
        color: #0018e0;
    }

    .quotes tr td:first-child {
        padding-left: 5px;
        color: #000;
    }

    .trend {
        display: inline-block;
        width: 13px;
        height: 12px;
        margin-right: 7px;
        vertical-align: -2px;
        fill: #e0502c;
        stroke: #9a2a12;
        overflow: visible;
    }

    .rising .trend {
        fill: #2fb038;
        stroke: #146d1c;
    }

    .scrollbar {
        display: flex;
        flex: none;
        flex-direction: column;
        align-items: center;
        width: 19px;
        margin-right: 3px;
        padding: 8px 0;
    }

    .scrollbar svg {
        width: 10px;
        height: 6px;
        fill: none;
        stroke: #444;
        stroke-width: 1.5;
    }

    .thumb {
        width: 19px;
        height: 107px;
        margin: 7px 0 auto;
        background: #cdcdcd;
    }

    .gm9 .thumb {
        height: 37px;
    }

    /* tab strips */
    .tabs {
        display: flex;
        height: 25px;
        color: #6d6d6d;
    }

    .tab {
        position: relative;
        flex: none;
        box-sizing: border-box;
        height: 25px;
        padding: 0 13px 3px 12px;
    }

    .tab:not(.current)::after {
        position: absolute;
        top: 4px;
        right: 0;
        width: 1px;
        height: 18px;
        background: #777;
        content: "";
    }

    .tab.current {
        margin-top: -1px;
        border: 1px solid #000;
        border-top-color: #fff;
        background: #fff;
        color: #000;
    }

    .panel-tabs {
        padding-left: 3px;
        border-left: 1px solid #c0c0c0;
    }

    .panel-tabs .tab {
        padding: 0 12px 1px 11px;
    }

    .tree {
        flex: 1;
        margin: 1px 0 0;
        padding: 1px 0 0 6px;
        border-top: 1px solid #a0a0a0;
        border-left: 1px solid #a0a0a0;
        border-bottom: 1px solid #000;
        overflow: hidden;
        background: #fff;
        font-size: 16px;
        list-style: none;
    }

    .tree li {
        display: flex;
        align-items: center;
        gap: 6px;
        height: 22px;
        white-space: nowrap;
    }

    .tree span {
        font-size: 15px;
    }

    .tree .icon {
        width: 20px;
        height: 20px;
    }

    .l1,
    .l2,
    .l3 {
        background: repeating-linear-gradient(#888 0 1px, #fff 1px 2px) 9px 0 / 1px 100% no-repeat;
    }

    .l1 { padding-left: 4px; }
    .l2 { padding-left: 30px; }

    .l3 {
        padding-left: 75px;
        background:
            repeating-linear-gradient(#888 0 1px, #fff 1px 2px) 9px 0 / 1px 100% no-repeat,
            repeating-linear-gradient(#888 0 1px, #fff 1px 2px) 61px 0 / 1px 11px no-repeat,
            repeating-linear-gradient(90deg, #888 0 1px, #fff 1px 2px) 61px 11px / 14px 1px no-repeat;
    }

    .box {
        flex: none;
        width: 9px;
        height: 9px;
        margin-right: 4px;
        border: 1px solid #919191;
        background: linear-gradient(#335, #335) center / 5px 1px no-repeat #fff;
    }

    .box.closed {
        background:
            linear-gradient(#335, #335) center / 5px 1px no-repeat,
            linear-gradient(#335, #335) center / 1px 5px no-repeat #fff;
    }

    .charts {
        display: flex;
        flex: 1;
        flex-direction: column;
        min-width: 0;
        padding-right: 2px;
    }

    .chart {
        flex: 1;
        min-height: 0;
        border-top: 1px solid #696969;
        border-left: 1px solid #696969;
        overflow: hidden;
        background: #000;
        contain: size;
    }

    .plot text {
        fill: #fff;
        font-size: 12px;
        white-space: pre;
    }

    .plot .grid {
        stroke: #8c8c8c;
        stroke-dasharray: 3 3;
    }

    .plot .frame {
        fill: none;
        stroke: #fff;
    }

    .plot .bid {
        stroke: #778899;
    }

    .plot .wick {
        stroke: #2fe02f;
    }

    .plot .body {
        fill: #000;
        stroke: #2fe02f;
    }

    .plot .bear,
    .plot .last-box,
    .plot .mark {
        fill: #fff;
    }

    .plot .last {
        fill: #000;
    }

    .chart-bar {
        display: flex;
        height: 23px;
        margin-top: 2px;
        border-top: 1px solid #000;
        border-left: 1px solid #808080;
    }

    .chart-bar .tabs {
        flex: 1;
        min-width: 0;
        padding-left: 6px;
        overflow: hidden;
    }

    .chart-bar .tab {
        height: 23px;
        padding: 0 13px 1px 12px;
        font-size: 16px;
    }

    .chart-bar .current {
        margin-top: 0;
        border-top: 0;
    }

    .pager {
        display: flex;
        align-items: center;
        gap: 18px;
        padding: 0 12px 0 7px;
    }

    .pager svg {
        width: 5px;
        height: 9px;
        fill: #999;
    }

    .pager .more {
        fill: #000;
    }

    /* terminal */
    .terminal {
        display: flex;
        flex: none;
        box-sizing: border-box;
        height: 274px;
        padding: 5px 6px 6px 2px;
        border-top: 1px solid #b8b8b8;
    }

    .gm9 .terminal {
        height: 191px;
    }

    .handle {
        display: flex;
        flex: none;
        flex-direction: column;
        gap: 2px;
        width: 18px;
    }

    .band {
        display: flex;
        flex: 1;
        align-items: flex-end;
        width: 17px;
        background: linear-gradient(#d5e1f1, #bccbdd);
    }

    .gm9 .band {
        background: linear-gradient(#b4cdea, #9fb8d8);
    }

    .band span {
        writing-mode: vertical-rl;
        text-orientation: sideways;
        transform: rotate(180deg);
        width: 17px;
        padding-top: 2px;
        font-size: 14px;
        line-height: 17px;
    }

    .ledger {
        display: flex;
        flex: 1;
        flex-direction: column;
        min-width: 0;
        border-left: 1px solid #a0a0a0;
    }

    .ledger-body {
        flex: 1;
        border-top: 1px solid #a0a0a0;
        border-bottom: 1px solid #000;
        background: #fff;
    }

    .orders {
        width: 100%;
    }

    .orders th:nth-child(n) { width: 65px; }
    .orders th:nth-child(1) { width: 84px; }
    .orders th:nth-child(2) { width: 118px; }
    .orders th:nth-child(3),
    .orders th:nth-child(5) { width: 59px; }
    .orders th:nth-child(4) { width: 46px; }
    .orders th:last-child { width: auto; }

    .gm9 .orders th:nth-child(n) { width: 59px; }
    .gm9 .orders th:nth-child(1) { width: 76px; }
    .gm9 .orders th:nth-child(2) { width: 107px; }
    .gm9 .orders th:nth-child(3),
    .gm9 .orders th:nth-child(5) { width: 53px; }
    .gm9 .orders th:nth-child(4) { width: 41px; }
    .gm9 .orders th:last-child { width: auto; }

    .sort {
        margin-left: 6px;
        color: #888;
        font-size: 10px;
    }

    .orders td {
        padding-bottom: 2px;
        background: #c8c8c8;
        font-weight: 700;
        white-space: pre;
    }

    .orders td:first-child {
        padding-left: 0;
    }

    .none {
        display: inline-block;
        width: 10px;
        height: 10px;
        margin: 0 9px 0 8px;
        fill: none;
        stroke: #777;
        stroke-width: 1.5;
    }

    .ledger .tabs {
        padding-left: 2px;
        overflow: hidden;
    }

    .ledger .tabs .current {
        margin-top: 0;
        border-top: 0;
    }

    sub {
        margin-left: 3px;
        vertical-align: -3px;
        color: #e0182c;
        font-size: 12px;
        font-weight: 700;
        line-height: 12px;
    }

    /* status bar */
    .status {
        display: flex;
        align-items: center;
        height: 28px;
        border-top: 1px solid #a0a0a0;
        white-space: nowrap;
    }

    .status span {
        flex: none;
        box-sizing: border-box;
        width: 98px;
        height: 24px;
        padding: 0 0 0 6px;
        border-left: 1px solid #a0a0a0;
        line-height: 24px;
    }

    .status .hint {
        width: 244px;
        padding-left: 2px;
        border-left: 0;
    }

    .status .profile {
        width: 156px;
    }

    .status .profile + span {
        width: 144px;
    }

    .status span:nth-of-type(6) {
        width: 94px;
    }

    .status span:nth-of-type(7) {
        width: 34px;
    }

    .gm9 .status span:nth-of-type(6) {
        width: 49px;
    }

    .gm9 .status span:nth-of-type(7) {
        width: 6px;
    }

    .resize {
        align-self: flex-end;
        width: 14px;
        height: 14px;
        margin-left: auto;
        stroke: #888;
    }

    /* pen marks drawn over the windows */
    .ink {
        position: absolute;
        fill: none;
        stroke: #ee3338;
        stroke-width: 3;
        overflow: visible;
        pointer-events: none;
    }

    .ink.name {
        top: 33px;
        left: 31px;
        width: 144px;
        height: 12px;
    }

    .ink.name.solid {
        top: 29px;
        left: 39px;
        fill: #ee3338;
    }

    .ink.money {
        bottom: 206px;
        left: 70px;
        width: 118px;
        height: 84px;
    }

    .gm9 .ink.money {
        bottom: 143px;
        left: 64px;
        width: 144px;
        height: 74px;
    }

    .activate,
    .watermark {
        position: absolute;
        pointer-events: none;
        white-space: nowrap;
    }

    .activate {
        right: 78px;
        bottom: 2px;
        color: rgba(120, 120, 120, 0.5);
        font-size: 26px;
        line-height: 30px;
    }

    .watermark {
        display: flex;
        align-items: center;
        gap: 8px;
        right: 20px;
        bottom: 34px;
        color: #fff;
        font-size: 30px;
        line-height: 34px;
        text-shadow: 1px 1px 1px #222;
    }

    .watermark svg {
        width: 32px;
        height: 34px;
    }
</style>
